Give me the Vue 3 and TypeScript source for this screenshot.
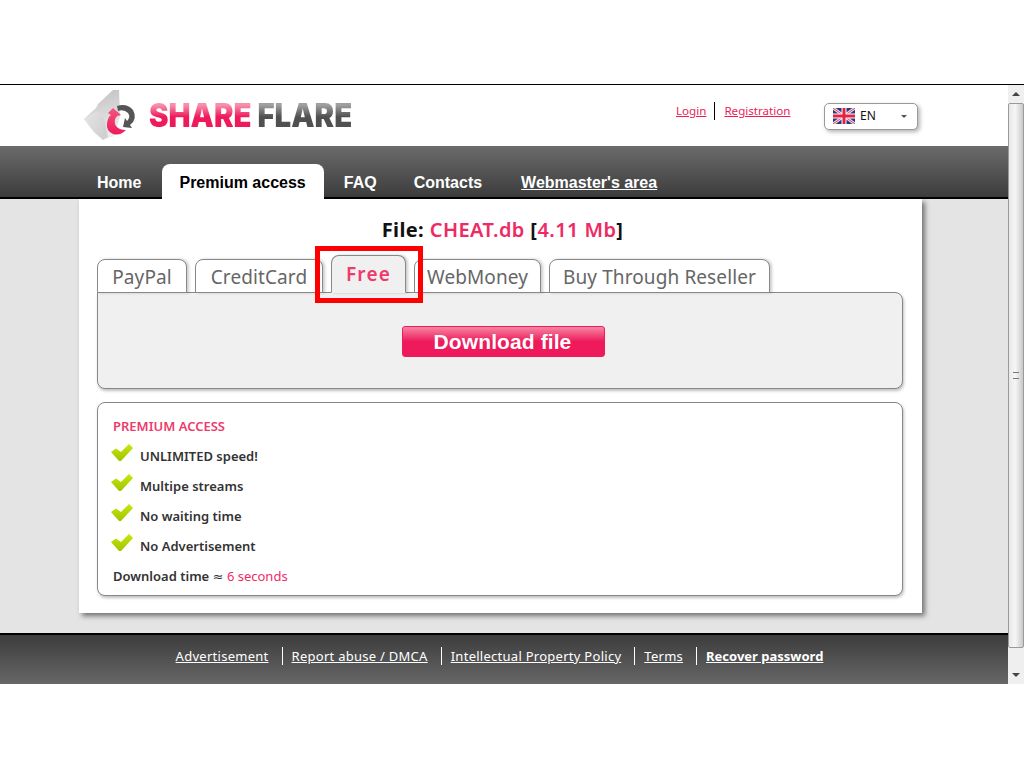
<script setup lang="ts">
const tabs = [
  { label: 'PayPal', width: 90, active: false },
  { label: 'CreditCard', width: 128, active: false },
  { label: 'Free', width: 75, active: true },
  { label: 'WebMoney', width: 127, active: false },
  { label: 'Buy Through Reseller', width: 221, active: false },
]
const features = ['UNLIMITED speed!', 'Multipe streams', 'No waiting time', 'No Advertisement']
const footerLinks = [
  { label: 'Advertisement', strong: false },
  { label: 'Report abuse / DMCA', strong: false },
  { label: 'Intellectual Property Policy', strong: false },
  { label: 'Terms', strong: false },
  { label: 'Recover password', strong: true },
]
</script>

<template>
  <div class="stage">
    <div class="window">
      <div class="page">
        <header class="header">
          <div class="logo">
            <svg class="logo-mark" width="60" height="54" viewBox="0 0 60 54">
              <defs>
                <linearGradient id="fold" x1="0.3" y1="0" x2="0.5" y2="1">
                  <stop offset="0" stop-color="#c2c2c2" />
                  <stop offset="1" stop-color="#efefef" />
                </linearGradient>
                <linearGradient id="fold2" x1="0" y1="0" x2="1" y2="0.6">
                  <stop offset="0" stop-color="#e6e6e6" />
                  <stop offset="1" stop-color="#d0d0d0" />
                </linearGradient>
                <linearGradient id="twist" x1="0" y1="0" x2="0" y2="1">
                  <stop offset="0" stop-color="#f5557f" />
                  <stop offset="1" stop-color="#ee1a5b" />
                </linearGradient>
              </defs>
              <path d="M4 33 L16 22 L18 18 L33 4 L39 4 L40 30 L34 50 L23 54 L14 46 Z" fill="url(#fold)" />
              <path d="M4 33 L17 25 L24 32 L28 51 L23 54 L14 46 Z" fill="url(#fold2)" />
              <path d="M37 20 Q47 17 53 24 Q58 33 50 39 L52 42 L43 41 L45 32 L47 35 Q51 31 48 27 Q44 23 38 25 Z" fill="#555" />
              <path d="M33 22 L41 29 L37 30 Q33 35 36 40 Q39 44 46 44 Q40 50 33 48 Q26 45 27 37 Q28 31 31 29 L28 27 Z" fill="url(#twist)" />
            </svg>
            <span class="logo-text"><span class="share">SHARE</span> <span class="flare">FLARE</span></span>
          </div>
          <div class="auth">
            <a class="auth-link login">Login</a>
            <a class="auth-link">Registration</a>
          </div>
          <div class="lang">
            <svg width="22" height="16" viewBox="0 0 22 16">
              <rect width="22" height="16" fill="#2b3a80" />
              <path d="M0 0 L22 16 M22 0 L0 16" stroke="#e8dfe6" stroke-width="3" />
              <path d="M0 0 L22 16 M22 0 L0 16" stroke="#e0455f" stroke-width="1" />
              <path d="M11 0 V16 M0 8 H22" stroke="#fff" stroke-width="5" />
              <path d="M11 0 V16 M0 8 H22" stroke="#e62244" stroke-width="3" />
            </svg>
            <span class="lang-code">EN</span>
            <span class="caret"></span>
          </div>
        </header>

        <nav class="nav">
          <a class="nav-item">Home</a>
          <a class="nav-item active">Premium access</a>
          <a class="nav-item">FAQ</a>
          <a class="nav-item contacts">Contacts</a>
          <a class="nav-item under">Webmaster's area</a>
        </nav>

        <main class="content">
          <section class="card">
            <h1 class="file-title">File: <span class="pink">CHEAT.db</span> [<span class="pink">4.11 Mb</span>]</h1>
            <div class="tabs">
              <div
                v-for="t in tabs"
                :key="t.label"
                class="tab"
                :class="{ on: t.active }"
                :style="{ width: t.width + 'px' }"
              >{{ t.label }}</div>
            </div>
            <div class="panel download-panel">
              <button class="download">Download file</button>
            </div>
            <div class="panel info">
              <div class="info-title">PREMIUM ACCESS</div>
              <ul class="features">
                <li v-for="f in features" :key="f" class="feature">
                  <svg class="check" width="22" height="18" viewBox="0 0 22 18">
                    <defs>
                      <linearGradient id="chk" x1="0" y1="0" x2="0" y2="1">
                        <stop offset="0" stop-color="#cbe60a" />
                        <stop offset="1" stop-color="#9fc400" />
                      </linearGradient>
                    </defs>
                    <path d="M0 8 L5 4.5 L10 8 L18 0 L22 4 L10 17 L8 17 Z" fill="url(#chk)" />
                  </svg>
                  <span>{{ f }}</span>
                </li>
              </ul>
              <div class="time"><b>Download time</b> ≈ <span class="pink">6 seconds</span></div>
            </div>
            <div class="highlight"></div>
          </section>
        </main>

        <footer class="footer">
          <template v-for="(l, i) in footerLinks" :key="l.label">
            <span v-if="i" class="sep"></span>
            <a class="foot-link" :class="{ strong: l.strong }">{{ l.label }}</a>
          </template>
        </footer>
      </div>

      <div class="scrollbar">
        <div class="arrow up"></div>
        <div class="thumb"><span class="grip"></span></div>
        <div class="track"></div>
        <div class="arrow down"></div>
      </div>
    </div>
  </div>
</template>

<style>
html, body { margin: 0; background: #fff; }
</style>

<style scoped>
.stage {
  width: 1024px;
  height: 768px;
  padding-top: 84px;
  box-sizing: border-box;
  overflow: hidden;
  background: #fff;
  font-family: "Noto Sans", "DejaVu Sans", sans-serif;
}
.window {
  display: flex;
  height: 600px;
  border-top: 1px solid #000;
}
.page {
  width: 1008px;
  display: flex;
  flex-direction: column;
}
.header {
  height: 61px;
  flex: none;
  display: flex;
  background: #fff;
  position: relative;
}
.logo {
  margin-left: 80px;
  display: flex;
  align-items: flex-start;
}
.logo-mark { margin-top: 1px; flex: none; }
.logo-text {
  margin-left: 9px;
  margin-top: 9px;
  font: 900 33px/42px Inter, "Liberation Sans", sans-serif;
  white-space: nowrap;
  transform: scaleX(0.89);
  transform-origin: left center;
}
.share, .flare {
  -webkit-background-clip: text;
  background-clip: text;
  color: transparent;
}
.share { background-image: linear-gradient(#f890ac 25%, #ee1a5b 55%); }
.flare { background-image: linear-gradient(#a0a0a0 25%, #505050 55%); }
.auth {
  position: absolute;
  left: 676px;
  top: 17px;
  display: flex;
  font-size: 11.6px;
  line-height: 18px;
}
.auth-link {
  color: #ee1a5b;
  text-decoration: underline;
}
.login {
  padding-right: 8px;
  margin-right: 9px;
  border-right: 1px solid #000;
}
.lang {
  position: absolute;
  left: 824px;
  top: 18px;
  width: 94px;
  height: 27px;
  box-sizing: border-box;
  border: 1px solid #999;
  border-radius: 5px;
  box-shadow: 2px 2px 4px rgba(0, 0, 0, 0.3);
  background: #fff;
  display: flex;
  align-items: center;
  padding: 0 0 2px 8px;
  font-size: 12px;
  color: #111;
}
.lang-code { margin-left: 5px; }
.caret {
  position: absolute;
  right: 10px;
  top: 11px;
  border: 3px solid transparent;
  border-top: 3px solid #555;
  border-bottom: 0;
}
.nav {
  height: 53px;
  flex: none;
  box-sizing: border-box;
  border-bottom: 2px solid #000;
  background: linear-gradient(#6b6b6b, #3c3c3c);
  display: flex;
  align-items: flex-end;
  padding-left: 79px;
  font: bold 16px/18px "Liberation Sans", sans-serif;
}
.nav-item {
  color: #fff;
  padding: 0 18px;
  height: 35px;
  line-height: 38px;
  margin-bottom: -2px;
  position: relative;
  z-index: 1;
}
.nav-item.active {
  background: #fff;
  color: #000;
  border-radius: 8px 8px 0 0;
  height: 35px;
  margin: 0 2px -2px 2.5px;
  padding: 0 18px 0 17.5px;
}
.nav-item.contacts { margin-left: 1px; }
.nav-item.under {
  text-decoration: underline;
  margin-left: 3px;
}
.content {
  height: 434px;
  flex: none;
  background: #e4e4e4;
  padding-left: 79px;
  box-sizing: border-box;
}
.card {
  position: relative;
  width: 843px;
  height: 414px;
  background: #fff;
  box-shadow: 3px 3px 5px rgba(0, 0, 0, 0.5);
  padding: 0 18px;
  box-sizing: border-box;
}
.file-title {
  margin: 0 0 0 4px;
  padding-top: 18px;
  height: 60px;
  box-sizing: border-box;
  text-align: center;
  font-size: 20px;
  letter-spacing: 0.4px;
  font-weight: 700;
  line-height: 26px;
  color: #111;
}
.pink { color: #ee2a64; font-weight: 400; }
.file-title .pink { font-weight: 600; }
.tabs {
  display: flex;
  align-items: flex-end;
  gap: 8px;
  height: 34px;
  position: relative;
  z-index: 1;
  margin-bottom: -1px;
}
.tab {
  height: 34px;
  box-sizing: border-box;
  border: 1px solid #888;
  border-radius: 8px 8px 0 0;
  background: #fff;
  text-align: center;
  font-size: 19px;
  line-height: 35px;
  color: #666;
  letter-spacing: 0.1px;
  white-space: nowrap;
  box-shadow: 2px 0 3px rgba(0, 0, 0, 0.2);
}
.tab.on {
  height: 38px;
  background: #f0f0f0;
  border-bottom-color: #f0f0f0;
  color: #ee3a6c;
  font-weight: 600;
  line-height: 36px;
  letter-spacing: 1.2px;
}
.panel {
  border: 1px solid #888;
  border-radius: 8px;
  box-shadow: 1px 2px 3px rgba(0, 0, 0, 0.25);
  box-sizing: border-box;
}
.download-panel {
  height: 97px;
  width: 806px;
  background: #f0f0f0;
  border-top-left-radius: 0;
  display: flex;
  justify-content: center;
  padding-top: 33px;
  margin-bottom: 13px;
}
.download {
  width: 203px;
  height: 31px;
  margin-left: 7px;
  padding: 0 2px 0 0;
  border: 1px solid #ee1a5b;
  border-radius: 3px;
  background: linear-gradient(#f686a4, #ee1a5b 50%);
  color: #fff;
  font: bold 21px/28px "Liberation Sans", sans-serif;
  letter-spacing: 0.1px;
}
.info {
  height: 194px;
  width: 806px;
  background: #fff;
  padding: 13px 15px 0;
  position: relative;
}
.info-title {
  font-size: 13px;
  font-weight: 600;
  line-height: 20px;
  color: #ee3a6c;
}
.features {
  list-style: none;
  margin: 5px 0 0;
  padding: 0;
}
.feature {
  height: 30px;
  display: flex;
  align-items: center;
  font-size: 13px;
  font-weight: 600;
  color: #333;
  position: relative;
  padding-left: 27px;
}
.check {
  position: absolute;
  left: -2px;
  top: 3px;
}
.time {
  line-height: 30px;
  font-size: 13px;
  color: #333;
}
.time b { font-weight: 600; }
.highlight {
  position: absolute;
  left: 236px;
  top: 47px;
  width: 108px;
  height: 57px;
  box-sizing: border-box;
  border: 5px solid #f00;
  z-index: 2;
}
.footer {
  height: 51px;
  flex: none;
  box-sizing: border-box;
  border-top: 2px solid #000;
  background: linear-gradient(#3c3c3c, #676767);
  display: flex;
  justify-content: center;
  align-items: flex-start;
  padding: 12px 9px 0 0;
  font-size: 13px;
  line-height: 18px;
}
.foot-link {
  color: #fff;
  text-decoration: underline;
  white-space: nowrap;
  letter-spacing: 0.27px;
}
.foot-link.strong {
  font-weight: 700;
  letter-spacing: 0;
}
.sep {
  width: 1px;
  height: 18px;
  background: #fff;
  margin: 0 9px 0 13px;
}
.scrollbar {
  width: 16px;
  flex: none;
  height: 599px;
  background: #efefef;
  display: flex;
  flex-direction: column;
}
.arrow {
  height: 18px;
  flex: none;
  position: relative;
}
.arrow::after {
  content: "";
  position: absolute;
  left: 4px;
  top: 7px;
  border: 4px solid transparent;
}
.arrow.up::after { border-bottom: 4px solid #444; border-top: 0; }
.arrow.down::after { border-top: 4px solid #444; border-bottom: 0; }
.thumb {
  height: 545px;
  flex: none;
  box-sizing: border-box;
  border: 1px solid #9a9a9a;
  border-radius: 2px;
  background: linear-gradient(90deg, #e8e8e8, #f6f6f6 45%, #c8c8cc);
  display: flex;
  align-items: center;
  justify-content: center;
}
.track { flex: 1; }
.grip {
  width: 6px;
  height: 5px;
  border-top: 1px solid #777;
  border-bottom: 1px solid #777;
  position: relative;
}
</style>
